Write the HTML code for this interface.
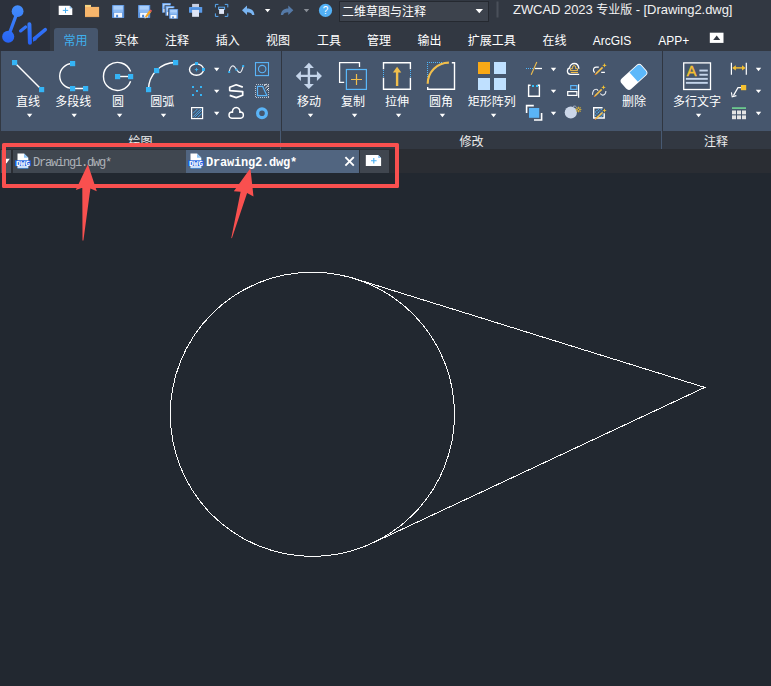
<!DOCTYPE html>
<html lang="zh-CN">
<head>
<meta charset="utf-8">
<title>ZWCAD 2023 专业版 - [Drawing2.dwg]</title>
<style>
html,body{margin:0;padding:0;}
body{width:771px;height:686px;overflow:hidden;background:#222830;position:relative;
  font-family:"Liberation Sans","Noto Sans CJK SC",sans-serif;font-size:12px;color:#fff;}
.abs{position:absolute;}
#titlebar{left:0;top:0;width:771px;height:131px;background:#323842;}
#logo{left:0;top:0;width:50px;height:51px;background:#2c313c;}
#ribbon{left:1px;top:51px;width:770px;height:80px;background:#46566d;}
#acttab{left:54px;top:28px;width:44px;height:23px;background:#46566d;border-radius:3px 3px 0 0;}
#labels{left:0;top:131px;width:771px;height:18px;background:#323842;}
#tabstrip{left:0;top:149px;width:771px;height:24px;background:#2a2d33;}
.t{position:absolute;white-space:nowrap;transform:translateX(-50%);line-height:16px;height:16px;}
.tab{top:33px;color:#fff;}
.lbl{top:94px;}
.grp{top:134px;color:#ececec;}
#ws{left:339px;top:1px;width:148px;height:19px;background:#3d434d;border:1px solid #252930;}
#wstxt{left:342px;top:4px;line-height:16px;white-space:nowrap;}
#title{left:513px;top:1px;font-size:13px;line-height:18px;white-space:nowrap;color:#f2f2f2;letter-spacing:-0.05px;}
.doc{position:absolute;top:150px;height:23px;}
.doctxt{position:absolute;top:156px;font-family:"Liberation Mono","DejaVu Sans Mono",monospace;font-size:12px;letter-spacing:-1.2px;line-height:14px;white-space:nowrap;}
svg{position:absolute;left:0;top:0;}
</style>
</head>
<body>
<div id="titlebar" class="abs"></div>
<div id="logo" class="abs"></div>
<div id="acttab" class="abs"></div>
<div id="ribbon" class="abs"></div>
<div id="labels" class="abs"></div>
<div id="tabstrip" class="abs"></div>

<!-- workspace dropdown + title -->
<div id="ws" class="abs"></div>
<div id="wstxt" class="abs">二维草图与注释</div>
<div id="title" class="abs">ZWCAD 2023 <span style="font-size:12px">专业版</span> - [Drawing2.dwg]</div>

<!-- ribbon tabs -->
<div class="t tab" style="left:75.5px;color:#3fb0ee;">常用</div>
<div class="t tab" style="left:126.5px;">实体</div>
<div class="t tab" style="left:177px;">注释</div>
<div class="t tab" style="left:227.7px;">插入</div>
<div class="t tab" style="left:278px;">视图</div>
<div class="t tab" style="left:329px;">工具</div>
<div class="t tab" style="left:379px;">管理</div>
<div class="t tab" style="left:429.5px;">输出</div>
<div class="t tab" style="left:491.8px;">扩展工具</div>
<div class="t tab" style="left:554.5px;">在线</div>
<div class="t tab" style="left:612px;">ArcGIS</div>
<div class="t tab" style="left:673.8px;">APP+</div>

<!-- ribbon big button labels -->
<div class="t lbl" style="left:28px;">直线</div>
<div class="t lbl" style="left:73.3px;">多段线</div>
<div class="t lbl" style="left:118px;">圆</div>
<div class="t lbl" style="left:162.3px;">圆弧</div>
<div class="t lbl" style="left:309px;">移动</div>
<div class="t lbl" style="left:353px;">复制</div>
<div class="t lbl" style="left:397px;">拉伸</div>
<div class="t lbl" style="left:441px;">圆角</div>
<div class="t lbl" style="left:491.8px;">矩形阵列</div>
<div class="t lbl" style="left:634px;">删除</div>
<div class="t lbl" style="left:697px;">多行文字</div>

<!-- group labels -->
<div class="t grp" style="left:140.4px;">绘图</div>
<div class="t grp" style="left:471.5px;">修改</div>
<div class="t grp" style="left:716px;">注释</div>

<!-- document tabs -->
<div class="doc" style="left:1px;width:10px;background:#49515b;"></div>
<div class="doc" style="left:13px;width:173px;background:#404750;"></div>
<div class="doc" style="left:186px;width:173px;background:#516580;"></div>
<div class="doc" style="left:360px;width:29px;background:#40464f;"></div>
<div class="doctxt" style="left:33px;color:#aeb2b8;">Drawing1.dwg*</div>
<div class="doctxt" style="left:206px;color:#fff;font-weight:bold;letter-spacing:-0.2px;">Drawing2.dwg*</div>

<svg id="gfx" width="771" height="686" viewBox="0 0 771 686">
<!-- GFX-START -->
<!-- logo -->
<defs>
  <linearGradient id="lg" x1="0" y1="5" x2="0" y2="45" gradientUnits="userSpaceOnUse">
    <stop offset="0" stop-color="#448efc"/><stop offset="1" stop-color="#2560f4"/>
  </linearGradient>
  <g id="floppy">
    <rect x="0" y="0" width="12.2" height="13" rx="0.6" fill="#5b93dd"/>
    <rect x="1.3" y="0.8" width="9.6" height="4.2" fill="#aacffb"/>
    <rect x="1.3" y="5" width="9.6" height="2.6" fill="#8bbaf3"/>
    <rect x="2.1" y="7.9" width="8" height="4.6" fill="#f4f7fc"/>
    <rect x="4.1" y="9.9" width="2" height="2.6" fill="#4a86d8"/>
  </g>
  <g id="floppyS">
    <rect x="0" y="0" width="9" height="9.7" rx="0.5" fill="#5b93dd"/>
    <rect x="1" y="0.7" width="7" height="3.1" fill="#aacffb"/>
    <rect x="1" y="3.8" width="7" height="1.9" fill="#8bbaf3"/>
    <rect x="1.4" y="6" width="6" height="3.3" fill="#f4f7fc"/>
    <rect x="3.1" y="7.4" width="1.6" height="1.9" fill="#4a86d8"/>
  </g>
  <path id="dd" d="M-2.7 -1.7 H2.7 L0 1.7 Z"/>
</defs>
<g fill="url(#lg)" stroke="none">
  <circle cx="17.6" cy="11.2" r="5.9"/>
  <circle cx="8.2" cy="36.8" r="6.05"/>
</g>
<g fill="none" stroke="url(#lg)" stroke-linecap="round">
  <path d="M17.6 11.2 L8.2 36.8" stroke-width="3.3"/>
  <path d="M20.6 30.9 L25.6 27" stroke-width="3.2"/>
  <path d="M29.4 24.3 L29.9 42.8" stroke-width="4"/>
  <path d="M45.3 29.6 L34.5 38.6" stroke-width="3.5"/>
</g>
<path d="M33 37.6 L36.5 36 L36.5 40 L33 41.8 Z" fill="url(#lg)"/>
<!-- quick access toolbar -->
<g>
  <path d="M58.7 5.7 H69.7 L72.3 8.4 V15.1 H58.7 Z" fill="#fff"/>
  <path d="M69.7 5.7 V8.4 H72.3 Z" fill="#8cc6f7"/>
  <path d="M62.8 10.4 H68.2 M65.5 7.7 V13.1" stroke="#45aef2" stroke-width="1" fill="none"/>
  <rect x="85" y="4.9" width="6" height="3" fill="#f5d583"/>
  <rect x="85" y="6.9" width="14.1" height="10.1" fill="#f7b66c"/>
  <rect x="85" y="16.3" width="14.1" height="0.8" fill="#e8a55c"/>
  <use href="#floppy" x="112" y="4.9"/>
  <use href="#floppy" x="138" y="4.9"/>
  <path d="M149.2 10.6 L151.2 12 L146.6 17.6 L144.9 18.6 L145 16.6 Z" fill="#f5a623"/>
  <path d="M149.2 10.6 L150.2 9.4 L152.1 10.8 L151.2 12 Z" fill="#ee5a5a"/>
  <path d="M145 16.6 L146.6 17.6 L144.7 18.8 Z" fill="#c9ced6"/>
  <use href="#floppyS" x="162" y="3"/>
  <rect x="164.6" y="5.3" width="10.6" height="11.3" fill="#323842"/>
  <use href="#floppyS" x="165.4" y="6.1"/>
  <rect x="168.3" y="8.2" width="10.6" height="11.3" fill="#323842"/>
  <use href="#floppyS" x="169.1" y="9"/>
  <rect x="192.1" y="3.9" width="6.9" height="3.4" fill="#c7cfe2"/>
  <rect x="189" y="6.9" width="13.2" height="5.9" rx="0.6" fill="#5b9be8"/>
  <rect x="191" y="8.7" width="9.2" height="0.8" fill="#3f7fd0"/>
  <rect x="192.1" y="9.9" width="6.9" height="6.9" fill="#dfe6f6"/>
  <g fill="none" stroke="#5aa9f1" stroke-width="1">
    <path d="M215.4 7.4 V4.4 H218.4 M224.8 4.4 H227.8 V7.4 M227.8 13.4 V16.4 H224.8 M218.4 16.4 H215.4 V13.4"/>
    <rect x="218.6" y="7.2" width="6" height="2.2"/>
  </g>
  <rect x="219.1" y="9" width="4.9" height="4.9" fill="#dfe6f6"/>
  <path d="M242 10.3 L247 5.5 V8.5 C251.6 8.5 254.4 11.2 254.4 15 L252.2 15 C251.6 13.1 250.2 12.2 247 12.2 V15 Z" fill="#7ab5f2"/>
  <use href="#dd" x="267.6" y="10.6" fill="#fff"/>
  <path d="M293.3 10.3 L288.3 5.5 V8.5 C283.7 8.5 280.9 11.2 280.9 15 L283.1 15 C283.7 13.1 285.1 12.2 288.3 12.2 V15 Z" fill="#557aa8"/>
  <use href="#dd" x="306.5" y="10.6" fill="#8a8f98"/>
  <circle cx="325.5" cy="10.4" r="6.6" fill="#52b0f6"/>
  <path d="M475.6 9 H483 L479.3 13.2 Z" fill="#fff"/>
  <rect x="496.5" y="1.5" width="2" height="16" fill="#4a505a"/>
  <rect x="709.8" y="32.7" width="13.7" height="10.2" fill="#fff"/>
  <path d="M713.2 40 L716.7 35.6 L720.2 40 Z" fill="#323842"/>
</g>
<text x="325.5" y="14.1" font-family="Liberation Sans, sans-serif" font-size="10" fill="#fff" text-anchor="middle">?</text>
<!-- ribbon: draw group -->
<g id="draw" fill="none" stroke="#fff" stroke-width="1.4">
  <path d="M14.5 62.5 L41.5 89.5"/>
  <path d="M72.5 63.5 A12.8 12.5 0 0 0 72.5 88.5 H85.5"/>
  <path d="M130.6 71.6 A14 14 0 1 0 130.6 81.2"/>
  <path d="M117.5 76.5 H130.5"/>
  <path d="M148.5 89.5 A27 27 0 0 1 175.5 62.5"/>
  <ellipse cx="196.5" cy="69.6" rx="7" ry="5.7"/>
  <path d="M229.3 71.2 C230.2 66.6 232.6 64.6 234.4 66.6 C236.4 68.8 238 73.2 240.2 72.4 C241.8 71.8 242.4 69 243.2 66.4" stroke-width="1.1" stroke="#e8ecf2"/>
  <path d="M242.8 87.1 L236.2 84.8 L229.7 87.2 V90.6 L242.7 91.6 V95.2 L236.2 97.6 L229.7 95.4" stroke-width="1.7" stroke-linejoin="round"/>
  <rect x="255.5" y="84.5" width="13" height="13" stroke="#bcc3cf" stroke-dasharray="1 1" stroke-width="1" shape-rendering="crispEdges"/>
  <path d="M264 86.2 L266.4 83.8 M265.4 88.2 L268.6 85 M266.6 90.4 L269 88" stroke-width="0.9"/>
  <rect x="191.6" y="107.6" width="11" height="11" stroke-width="1.2"/>
  <path d="M231.8 118.3 H240.6 A3.2 3.2 0 0 0 240.9 112 L239.75 112.3 A3.7 3.7 0 1 0 232.65 112.3 L231.5 112 A3.2 3.2 0 0 0 231.8 118.3 Z" stroke-width="1.4" stroke-linejoin="round"/>
</g>
<g fill="#35b4f6" stroke="none">
  <rect x="12" y="60" width="5.2" height="5.2"/><rect x="39" y="87" width="5.2" height="5.2"/>
  <rect x="70" y="61" width="5.2" height="5.2"/><rect x="70" y="86" width="5.2" height="5.2"/><rect x="83" y="86" width="5.2" height="5.2"/>
  <rect x="115" y="74" width="5.2" height="5.2"/><rect x="128" y="74" width="5.2" height="5.2"/>
  <rect x="173" y="60" width="5.2" height="5.2"/><rect x="154" y="68" width="5.2" height="5.2"/><rect x="146" y="87" width="5.2" height="5.2"/>
  <rect x="195" y="62" width="3" height="3"/><rect x="202" y="68" width="3" height="3"/>
  <rect x="228.2" y="71" width="2" height="2"/><rect x="235.4" y="68.6" width="2" height="2"/><rect x="242.2" y="65" width="2" height="2"/>
  <rect x="192" y="86" width="2" height="2"/><rect x="200" y="86" width="2" height="2"/><rect x="196" y="90" width="2" height="2"/><rect x="192" y="94" width="2" height="2"/><rect x="200" y="94" width="2" height="2"/>
</g>
<g fill="none" stroke="#35b4f6" stroke-width="1">
  <path d="M194.8 69.6 H198.2 M196.5 67.9 V71.3" stroke-width="0.9"/>
  <rect x="255.5" y="62.6" width="13" height="13" stroke="#5ab4f7" stroke-width="1.1"/>
  <circle cx="262.2" cy="69.1" r="3.7" stroke="#5ab4f7" stroke-width="1.1"/>
  <path d="M257.5 86.4 H262.6 L266.9 95.6 H257.5 Z" stroke="#5ab4f7" stroke-width="1.2"/>
  <path d="M193 113.4 L197.6 108.8 M193 116.8 L201.2 108.6 M194.6 117.4 L201.6 110.4 M197.6 117.6 L201.8 113.4" stroke="#4aaef5" stroke-width="0.9"/>
  <circle cx="262" cy="113.3" r="4.4" stroke="#5ab4f7" stroke-width="3.2"/>
</g>
<g fill="#fff">
  <use href="#dd" x="29.6" y="115.5"/><use href="#dd" x="74.2" y="115.5"/><use href="#dd" x="119.6" y="115.5"/><use href="#dd" x="163.5" y="115.5"/>
  <use href="#dd" x="216.7" y="69.5"/><use href="#dd" x="216.7" y="91.4"/><use href="#dd" x="216.7" y="113.5"/>
</g>
<rect x="281" y="51" width="1" height="80" fill="#303641"/>
<rect x="662" y="51" width="1" height="80" fill="#303641"/>
<rect x="280" y="131" width="1" height="18" fill="#485a73"/>
<rect x="661" y="131" width="1" height="18" fill="#485a73"/>
<!-- ribbon: modify group -->
<g fill="#c4d4ea" stroke="none">
  <path transform="translate(308.9 75.9)" d="M0 -13.1 L5 -8 H1.2 V-1.2 H8 V-5 L13.1 0 L8 5 V1.2 H1.2 V8 H5 L0 13.1 L-5 8 H-1.2 V1.2 H-8 V5 L-13.1 0 L-8 -5 V-1.2 H-1.2 V-8 H-5 Z"/>
  <circle cx="570.8" cy="112.5" r="6.1" fill="#cbd6e8"/>
</g>
<g fill="none" stroke="#fff" stroke-width="1.3">
  <path d="M359.5 67 V62.6 H339.6 V82.4 H344.2"/>
  <path d="M383.5 69.2 V62.7 H410.4 V69.2 M410.4 77.8 V89.25 H383.5 V77.8" stroke-width="1.4"/>
  <path d="M427.7 87 V89.25 H454.5 V62.7 H451.8" stroke-width="1.4"/>
  <path d="M534.8 68.5 H542" stroke-width="1.3"/>
  <path d="M530.6 85.2 H528.6 V96.3 H539.4 V85.2 H537.6" stroke-width="1.4"/>
  <path d="M526.6 113 V105.6 H533.8 M534 120 H541.6 V113" stroke-width="1.6"/>
  <rect x="567.7" y="91.6" width="9.2" height="3.8" stroke-width="1.2"/>
  <path d="M578.6 84.2 V97.8" stroke-width="1.2"/>
  <path d="M579.2 74.3 H570.4 C568.4 74.3 567.3 72.6 567.4 70.8 C567.5 69.2 568.6 68.2 569.6 68 C569.8 65.4 572 63.5 574.4 63.5 C576.8 63.5 578.6 65.4 578.9 68.8" stroke-width="1.3"/>
  <path d="M598.8 67.2 H596.2 C594.2 67.2 593.3 68.8 593.5 70.4 C593.6 71.4 594.1 72.1 594.8 72.6 M601.2 72.3 H604.9" stroke-width="1.2"/>
  <path d="M592.5 94.8 C592.6 91.6 594.2 89.3 596.2 89.3 C597.2 89.3 597.8 90 598 90.8 M600.4 93.6 C601 94.8 601.8 95.2 602.8 95.1 C604.6 94.9 605.8 93 605.9 91" stroke-width="1.1" stroke="#e8ecf2"/>
  <path d="M602.6 107.7 H593.7 V118 H604.2 V113.2" stroke-width="1.4"/>
</g>
<g fill="none" stroke="#5ab4f7" stroke-width="1.2">
  <rect x="346.4" y="69.5" width="20" height="19.9" stroke="#5ab8fa" stroke-width="1.2"/>
  <g shape-rendering="crispEdges" stroke="#4fb6fa" stroke-width="1" stroke-dasharray="1 1">
  <path d="M383.5 70 V78"/>
  <path d="M410.5 70 V78"/>
  <path d="M427 62.5 H442 M427.5 64 V77"/>
  <path d="M526 68.5 H534"/>
  </g>
  <rect x="570.7" y="85.6" width="6.2" height="3.8" stroke-width="1.2"/>
  <path d="M595.2 112.4 L598.6 109 M595.2 115.6 L601.8 109 M597.6 116.8 L603 111.4 M600.8 116.8 L603.2 114.4" stroke-width="1.2" stroke="#55b8fa" stroke-dasharray="1.1 0.9"/>
</g>
<g fill="#35c0fa"><rect x="532" y="85" width="2" height="2"/><rect x="536" y="85" width="2" height="2"/></g>
<rect x="529" y="108" width="10.2" height="9.8" fill="#5ab4f7"/>
<g fill="none" stroke="#f0be4c" stroke-width="1.2">
  <path d="M351 79.5 H362 M356.5 74 V85"/>
  <path d="M397.1 86 V70" stroke-width="2.4"/>
  <path d="M427.7 83.8 A21.2 21.2 0 0 1 448.9 62.6" stroke-width="2.2"/>
  <path d="M531.2 74.8 L536.8 62" stroke-width="1.1"/>
  <path d="M570.8 72.5 H578 M572.6 68.7 V67.1 A1.5 1.5 0 0 1 575.6 67.1 V68.7 H577.5 V70.6 H570.5 V68.7 Z" stroke-width="1"/>
  <path d="M595.8 74 L602.6 67.4" stroke-width="1.7"/>
  <path d="M594.9 96 L601.7 89.4" stroke-width="1.7"/>
  <path d="M596 118.6 L602.5 112.5" stroke-width="1.7"/>
  <circle cx="578.5" cy="109.5" r="1.1" stroke-width="1" stroke="#f6c431"/>
  <path d="M578.5 106.7 V107.7 M578.5 111.3 V112.3 M575.7 109.5 H576.7 M580.3 109.5 H581.3 M576.5 107.5 L577.2 108.2 M579.8 110.8 L580.5 111.5 M580.5 107.5 L579.8 108.2 M577.2 110.8 L576.5 111.5" stroke-width="1.1" stroke="#f6c431"/>
</g>
<path d="M397.1 66.8 L401.3 72.4 H392.9 Z" fill="#f0be4c"/>
<g fill="#f6c431">
  <path d="M604.5 63 L605.1 64.7 L606.8 65.3 L605.1 65.9 L604.5 67.6 L603.9 65.9 L602.2 65.3 L603.9 64.7 Z"/>
  <path d="M603.5 85 L604.1 86.7 L605.8 87.3 L604.1 87.9 L603.5 89.6 L602.9 87.9 L601.2 87.3 L602.9 86.7 Z"/>
  <path d="M604.5 108.2 L605.1 109.9 L606.8 110.5 L605.1 111.1 L604.5 112.8 L603.9 111.1 L602.2 110.5 L603.9 109.9 Z"/>
</g>
<g fill="#ee7a2a"><circle cx="595.4" cy="74.4" r="0.7"/><circle cx="594.5" cy="96.4" r="0.7"/><circle cx="595.5" cy="119.2" r="0.7"/></g>
<path d="M573 106.6 C574.2 105.8 575.6 105.9 576.4 107" fill="none" stroke="#aeb9cc" stroke-width="0.9"/>
<rect x="478" y="62" width="12" height="12" fill="#f9a916"/>
<g fill="#bfe0ff"><rect x="494" y="62" width="12" height="12"/><rect x="478" y="78" width="12" height="12"/><rect x="494" y="78" width="12" height="12"/></g>
<g transform="translate(634 76.9) rotate(-42)">
  <rect x="-13.6" y="-7.1" width="27.2" height="14.2" rx="3.8" ry="3.8" fill="#fff"/>
  <path d="M-0.4 -6.3 H9.7 A3.1 3.1 0 0 1 12.8 -3.2 V3.2 A3.1 3.1 0 0 1 9.7 6.3 H-0.4 Z" fill="#5cb8fa"/>
</g>
<g fill="#fff">
  <use href="#dd" x="310.5" y="115.5"/><use href="#dd" x="354.6" y="115.5"/><use href="#dd" x="398.6" y="115.5"/><use href="#dd" x="442.4" y="115.5"/><use href="#dd" x="493.6" y="115.5"/>
  <use href="#dd" x="553.5" y="69.5"/><use href="#dd" x="553.5" y="91.4"/><use href="#dd" x="553.5" y="113.5"/>
  <use href="#dd" x="698.6" y="115.5"/>
  <use href="#dd" x="758.5" y="69.5"/><use href="#dd" x="758.5" y="91.4"/><use href="#dd" x="758.5" y="113.5"/>
</g>
<!-- ribbon: annotate group -->
<rect x="683.7" y="62.9" width="26.8" height="26.6" fill="none" stroke="#fff" stroke-width="1.3"/>
<g fill="#c4d4ea">
  <rect x="699.4" y="69.6" width="8.4" height="1.9"/><rect x="699.4" y="73.8" width="8.4" height="1.9"/>
  <rect x="685.9" y="77.9" width="21.9" height="1.9"/><rect x="685.9" y="81.9" width="21.9" height="1.9"/>
</g>
<text x="691.5" y="75.7" font-family="Liberation Sans, sans-serif" font-size="14.5" fill="#f5c030" stroke="#f5c030" stroke-width="0.45" text-anchor="middle">A</text>
<g fill="none" stroke="#fff" stroke-width="1.2">
  <path d="M731.4 62.8 V74.8 M746.3 62.8 V74.8"/>
  <path d="M741 87.6 H738 L733.4 95.6"/>
  <path d="M731.4 92.4 L732.2 96.8 L736.4 95.6" stroke-width="1.1"/>
</g>
<path d="M733.6 67.9 H744.2" stroke="#f5c030" stroke-width="1.4" fill="none"/>
<path d="M732.2 67.9 L735.8 65.3 V70.5 Z M745.6 67.9 L742 65.3 V70.5 Z" fill="#f5c030"/>
<rect x="741" y="85" width="5.2" height="5.2" fill="#f5c030"/>
<rect x="732" y="107.2" width="14" height="1.8" fill="#6cc88e"/>
<g fill="#e4e4e4">
  <rect x="732" y="110.5" width="4" height="3.8"/><rect x="737" y="110.5" width="4" height="3.8"/><rect x="742" y="110.5" width="4" height="3.8"/>
  <rect x="732" y="115.4" width="4" height="3.8"/><rect x="737" y="115.4" width="4" height="3.8"/><rect x="742" y="115.4" width="4" height="3.8"/>
</g>

<!-- document tab icons -->
<defs>
  <g id="dwg">
    <path d="M2.5 0 H9 L13.3 4.3 V14.6 H2.5 Z" fill="#fff"/>
    <path d="M9 0 V4.3 H13.3 Z" fill="#8cc4f6"/>
    <rect x="2.5" y="14.2" width="10.8" height="0.9" fill="#4a97f2"/>
    <rect x="0" y="6.8" width="15.8" height="5.9" fill="#1b5fe2"/>
    <text x="7.9" y="12" font-family="DejaVu Sans Mono, Liberation Mono, monospace" font-size="7" font-weight="bold" fill="#fff" text-anchor="middle" textLength="14" lengthAdjust="spacingAndGlyphs">DWG</text>
  </g>
</defs>
<use href="#dwg" x="15" y="153.5"/>
<use href="#dwg" x="188" y="153.5"/>
<path d="M3 158.8 H9.8 L6.4 163.4 Z" fill="#fff"/>
<path d="M345.4 157.2 L353.8 165.6 M353.8 157.2 L345.4 165.6" stroke="#fff" stroke-width="1.9" fill="none"/>
<path d="M365.8 155 H378.2 L381.1 157.9 V165.9 H365.8 Z" fill="#fff"/>
<path d="M378.2 155 V157.9 H381.1 Z" fill="#8cc6f7"/>
<path d="M371 160.8 H376.6 M373.8 158 V163.6" stroke="#45aef2" stroke-width="1.1" fill="none"/>
<!-- drawing -->
<g fill="none" stroke="#fbfbfb" stroke-width="1" shape-rendering="crispEdges">
  <circle cx="312.4" cy="414.3" r="142.1"/>
  <path d="M354.6 278.6 L704.8 387.4 L372.7 543"/>
</g>
<!-- red annotations -->
<path fill="#f9504f" fill-rule="evenodd" d="M3.5 143 H397.5 A1.5 1.5 0 0 1 399 144.5 V186.5 A1.5 1.5 0 0 1 397.5 188 H3.5 A1.5 1.5 0 0 1 2 186.5 V144.5 A1.5 1.5 0 0 1 3.5 143 Z M6 147 V184 H395 V147 Z"/>
<polygon fill="#f9504f" points="87.9,164.3 96.8,191.3 90.4,188.5 83.4,240.5 82.5,240.5 82.3,187.8 75.8,190"/>
<polygon fill="#f9504f" points="250.4,168.3 253.5,196.6 247.1,193 231.9,238.3 231.3,238 240.6,191.7 233.8,191.2"/>
<!-- GFX-END -->
</svg>
</body>
</html>
